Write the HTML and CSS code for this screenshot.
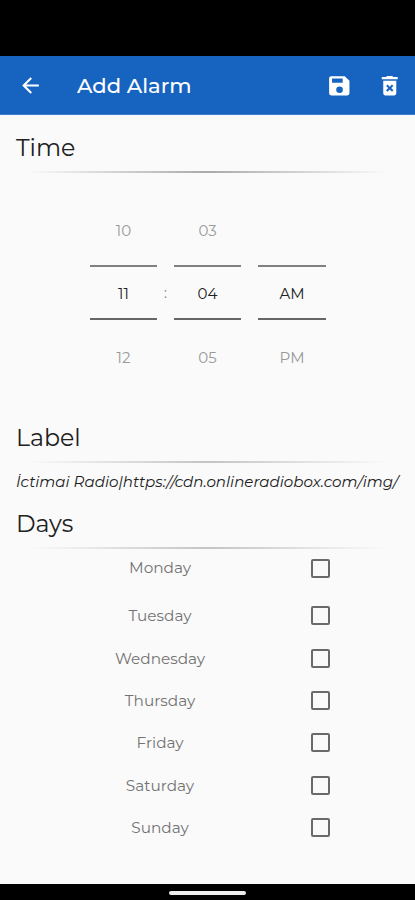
FILE: index.html
```
<!DOCTYPE html>
<html lang="en">
<head>
  <meta charset="UTF-8" />
  <meta name="viewport" content="width=device-width, initial-scale=1" />
  <title>Add Alarm</title>
  <link rel="stylesheet" href="styles.css">
</head>
<body>
  <div class="screen">
    <div class="status-bar"></div>

    <header class="app-bar">
      <button class="icon-btn" aria-label="Back">
        <svg viewBox="0 0 24 24"><path d="M20 11H7.83l5.59-5.59L12 4l-8 8 8 8 1.41-1.41L7.83 13H20v-2z"/></svg>
      </button>
      <h1 class="app-title">Add Alarm</h1>
      <button class="icon-btn save-btn" aria-label="Save">
        <svg viewBox="0 0 24 24"><path fill-rule="evenodd" d="M18 3H5a2 2 0 0 0-2 2v14.500a2 2 0 0 0 2 2h15.500a2 2 0 0 0 2-2V7.500L18 3zM13 19.300a3.200 3.200 0 1 1 0-6.400 3.200 3.200 0 0 1 0 6.400zM16 9.300H5.800V5.300H16v4z"/></svg>
      </button>
      <button class="icon-btn" aria-label="Delete">
        <svg viewBox="0 0 24 24"><path fill-rule="evenodd" d="M6 19.500c0 1.100.9 2 2 2h8.500c1.100 0 2-.9 2-2V7.500H6v12zm2.700-7.120 1.410-1.410 2.130 2.120 2.120-2.120 1.410 1.410-2.120 2.120 2.120 2.120-1.410 1.410-2.120-2.120-2.120 2.120-1.410-1.410 2.110-2.120-2.120-2.120zM15.700 3.800l-1-1h-5l-1 1H4.600v2.300h15.300V3.800h-4.200z"/></svg>
      </button>
    </header>

    <main class="content">
      <section>
        <h2 class="heading time-heading">Time</h2>
        <div class="divider dark"></div>
        <div class="picker">
          <div class="wheel">
            <span>10</span>
            <span class="selected">11</span>
            <span>12</span>
          </div>
          <div class="colon">:</div>
          <div class="wheel">
            <span>03</span>
            <span class="selected">04</span>
            <span>05</span>
          </div>
          <div class="wheel period">
            <span></span>
            <span class="selected">AM</span>
            <span>PM</span>
          </div>
        </div>
      </section>

      <section>
        <h2 class="heading">Label</h2>
        <div class="divider"></div>
        <p class="alarm-label">İctimai Radio|https://cdn.onlineradiobox.com/img/</p>
      </section>

      <section class="days-section">
        <h2 class="heading">Days</h2>
        <div class="divider"></div>
        <label class="day first"><span>Monday</span><input type="checkbox" /></label>
        <label class="day"><span>Tuesday</span><input type="checkbox" /></label>
        <label class="day"><span>Wednesday</span><input type="checkbox" /></label>
        <label class="day"><span>Thursday</span><input type="checkbox" /></label>
        <label class="day"><span>Friday</span><input type="checkbox" /></label>
        <label class="day"><span>Saturday</span><input type="checkbox" /></label>
        <label class="day"><span>Sunday</span><input type="checkbox" /></label>
      </section>
    </main>

    <footer class="nav-bar"><div class="handle"></div></footer>
  </div>
</body>
</html>
```
FILE: styles.css
```
* {
  box-sizing: border-box;
}
body {
  margin: 0;
  background: #fafafa;
  color: #202020;
  font-family: Montserrat, Inter, "Liberation Sans", sans-serif;
}
.screen {
  display: flex;
  flex-direction: column;
  height: 900px;
  overflow: hidden;
}
.status-bar {
  flex: none;
  height: 56px;
  background: #000;
}
.app-bar {
  flex: none;
  display: flex;
  align-items: center;
  height: 59px;
  padding: 0 13px 0 18px;
  background: #1764c0;
  border-bottom: 1px solid #3c7bca;
  color: #fff;
}
.icon-btn {
  width: 25px;
  height: 25px;
  padding: 0;
  border: none;
  background: none;
  color: inherit;
}
.icon-btn svg {
  display: block;
  width: 100%;
  height: 100%;
  fill: currentColor;
}
.save-btn {
  margin-right: 26px;
}
.app-title {
  flex: 1;
  margin: 1px 0 0 34px;
  font-size: 21.1px;
  font-weight: 500;
  line-height: 28px;
}
.content {
  flex: 1;
  padding: 0 16px;
}
.heading {
  margin: 0;
  padding-bottom: 9px;
  font-size: 23.7px;
  font-weight: 400;
  line-height: 28px;
}
.time-heading {
  padding-top: 19px;
}
.divider {
  height: 2px;
  background: linear-gradient(to right, transparent 3%, #c4c4c4 50%, transparent 97%);
}
.divider.dark {
  background: linear-gradient(to right, transparent 3%, #aaa 50%, transparent 97%);
}
.picker {
  display: flex;
  height: 251px;
  padding: 26px 0 0 74px;
}
.wheel {
  display: flex;
  flex-direction: column;
  width: 67px;
  text-align: center;
  font-size: 15px;
  color: #999;
}
.wheel span {
  height: 66px;
  line-height: 64px;
}
.wheel .selected {
  height: 55px;
  border-top: 2px solid #808080;
  border-bottom: 2px solid #666;
  line-height: 53px;
  color: #202020;
}
.wheel span:last-child {
  line-height: 75px;
}
.colon {
  width: 17px;
  padding-top: 67px;
  line-height: 54px;
  text-align: center;
  font-size: 14px;
  color: #888;
}
.period {
  width: 68px;
  margin-left: 17px;
}
.alarm-label {
  margin: 0;
  padding-top: 8px;
  font-size: 15.080px;
  font-style: italic;
  line-height: 22px;
  white-space: nowrap;
}
.days-section {
  padding-top: 17px;
}
.day {
  display: flex;
  align-items: center;
  height: 42.4px;
  font-size: 15.3px;
  color: #737373;
}
.day span {
  width: 288px;
  text-align: center;
}
.day input {
  appearance: none;
  width: 19px;
  height: 19px;
  margin: 0 0 0 7px;
  border: 2px solid #6a6a6a;
  border-radius: 2px;
}
.first {
  height: 45.5px;
  padding-bottom: 6px;
}
.first span {
  padding-bottom: 2px;
}
.nav-bar {
  flex: none;
  display: flex;
  justify-content: center;
  height: 16px;
  padding-top: 7px;
  background: #000;
}
.handle {
  width: 77px;
  height: 4px;
  border-radius: 2px;
  background: #eee;
}
```
